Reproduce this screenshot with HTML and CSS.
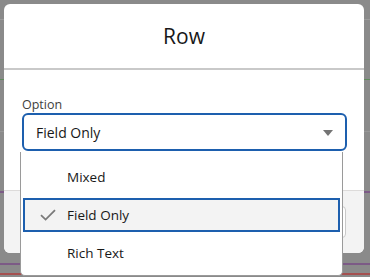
FILE: index.html
```html
<!DOCTYPE html>
<html lang="en">
<head>
  <meta charset="UTF-8" />
  <meta name="viewport" content="width=device-width, initial-scale=1.0">
  <title>Row</title>
  <link rel="stylesheet" href="styles.css">
</head>
<body>
  <div class="modal">
    <header class="modal-header">
      <h2>Row</h2>
    </header>

    <div class="modal-body">
      <label class="label">Option</label>
      <div class="combo">
        <div class="select">
          <span>Field Only</span>
          <span class="arrow"></span>
        </div>
        <ul class="listbox">
          <li class="option">Mixed</li>
          <li class="option selected">
            <svg class="check" width="16" height="12" viewBox="0 0 16 12">
              <path d="M1 6.2 L5.6 10.6 L15 1.2" fill="none" stroke="#7a7a7a" stroke-width="1.8"/>
            </svg>
            Field Only
          </li>
          <li class="option">Rich Text</li>
        </ul>
      </div>
    </div>

    <footer class="modal-footer">
      <button class="btn">Save</button>
    </footer>
  </div>
</body>
</html>
```

FILE: styles.css
```css
* {
  box-sizing: border-box;
}

body {
  margin: 0;
  padding: 4px 6px 0 4px;
  height: 277px;
  overflow: hidden;
  font-family: "Open Sans", sans-serif;
  color: #181818;
  background:
    linear-gradient(#8a8a8a 19px, #9b9b9b 19px, #9b9b9b 20px, transparent 20px),
    linear-gradient(transparent 79px, #5f8a5c 79px, #5f8a5c 80px, transparent 80px),
    linear-gradient(transparent 131px, #979797 131px, #979797 132px, transparent 132px),
    linear-gradient(transparent 191px, #7c5a86 191px, #7c5a86 193px, transparent 193px),
    linear-gradient(transparent 263px, #7c5a86 263px, #7c5a86 265px, transparent 265px),
    linear-gradient(transparent 273px, #a5504f 273px, #a5504f 275px, transparent 275px),
    #8a8a8a;
}

.modal {
  width: 360px;
  background: white;
  border-radius: 6px;
}

.modal-header {
  height: 66px;
  border-bottom: 2px solid #c9c9c9;
  display: flex;
  align-items: center;
  justify-content: center;
}

.modal-header h2 {
  margin: 0;
  font-size: 21px;
  font-weight: 400;
}

.modal-body {
  padding: 27px 17px 0 18px;
  height: 120px;
}

.label {
  display: block;
  font-size: 12.5px;
  line-height: 16px;
  color: #3e3e3c;
}

.combo {
  position: relative;
}

.select {
  height: 38px;
  border: 2px solid #1d5fae;
  border-radius: 6px;
  padding: 0 12px;
  display: flex;
  align-items: center;
  justify-content: space-between;
  font-size: 14px;
}

.arrow {
  width: 0;
  height: 0;
  border-left: 5.5px solid transparent;
  border-right: 5.5px solid transparent;
  border-top: 6px solid #747474;
  margin-top: 2px;
}

.listbox {
  position: absolute;
  top: 39px;
  left: -2px;
  width: 323px;
  margin: 0;
  padding: 8px 1px 5px;
  list-style: none;
  background: white;
  border: 1px solid #9a9a9a;
  border-top: none;
  border-radius: 0 0 5px 5px;
  display: flex;
  flex-direction: column;
  gap: 4px;
  z-index: 2;
}

.option {
  height: 34px;
  margin: 0 1px;
  padding-left: 44px;
  display: flex;
  align-items: center;
  font-size: 13.5px;
  position: relative;
}

.option.selected {
  background: #f3f3f3;
  border: 2px solid #1d5fae;
  padding-left: 42px;
}

.check {
  position: absolute;
  left: 15px;
  top: 9px;
}

.modal-footer {
  height: 63px;
  background: #f3f3f3;
  border-top: 1px solid #dddbda;
  border-radius: 0 0 6px 6px;
  display: flex;
  align-items: center;
  justify-content: flex-end;
  padding-right: 18px;
}

.btn {
  height: 32px;
  padding: 0 16px;
  background: white;
  border: 1px solid #c9c9c9;
  border-radius: 4px;
  font-family: inherit;
  font-size: 13px;
}
```
